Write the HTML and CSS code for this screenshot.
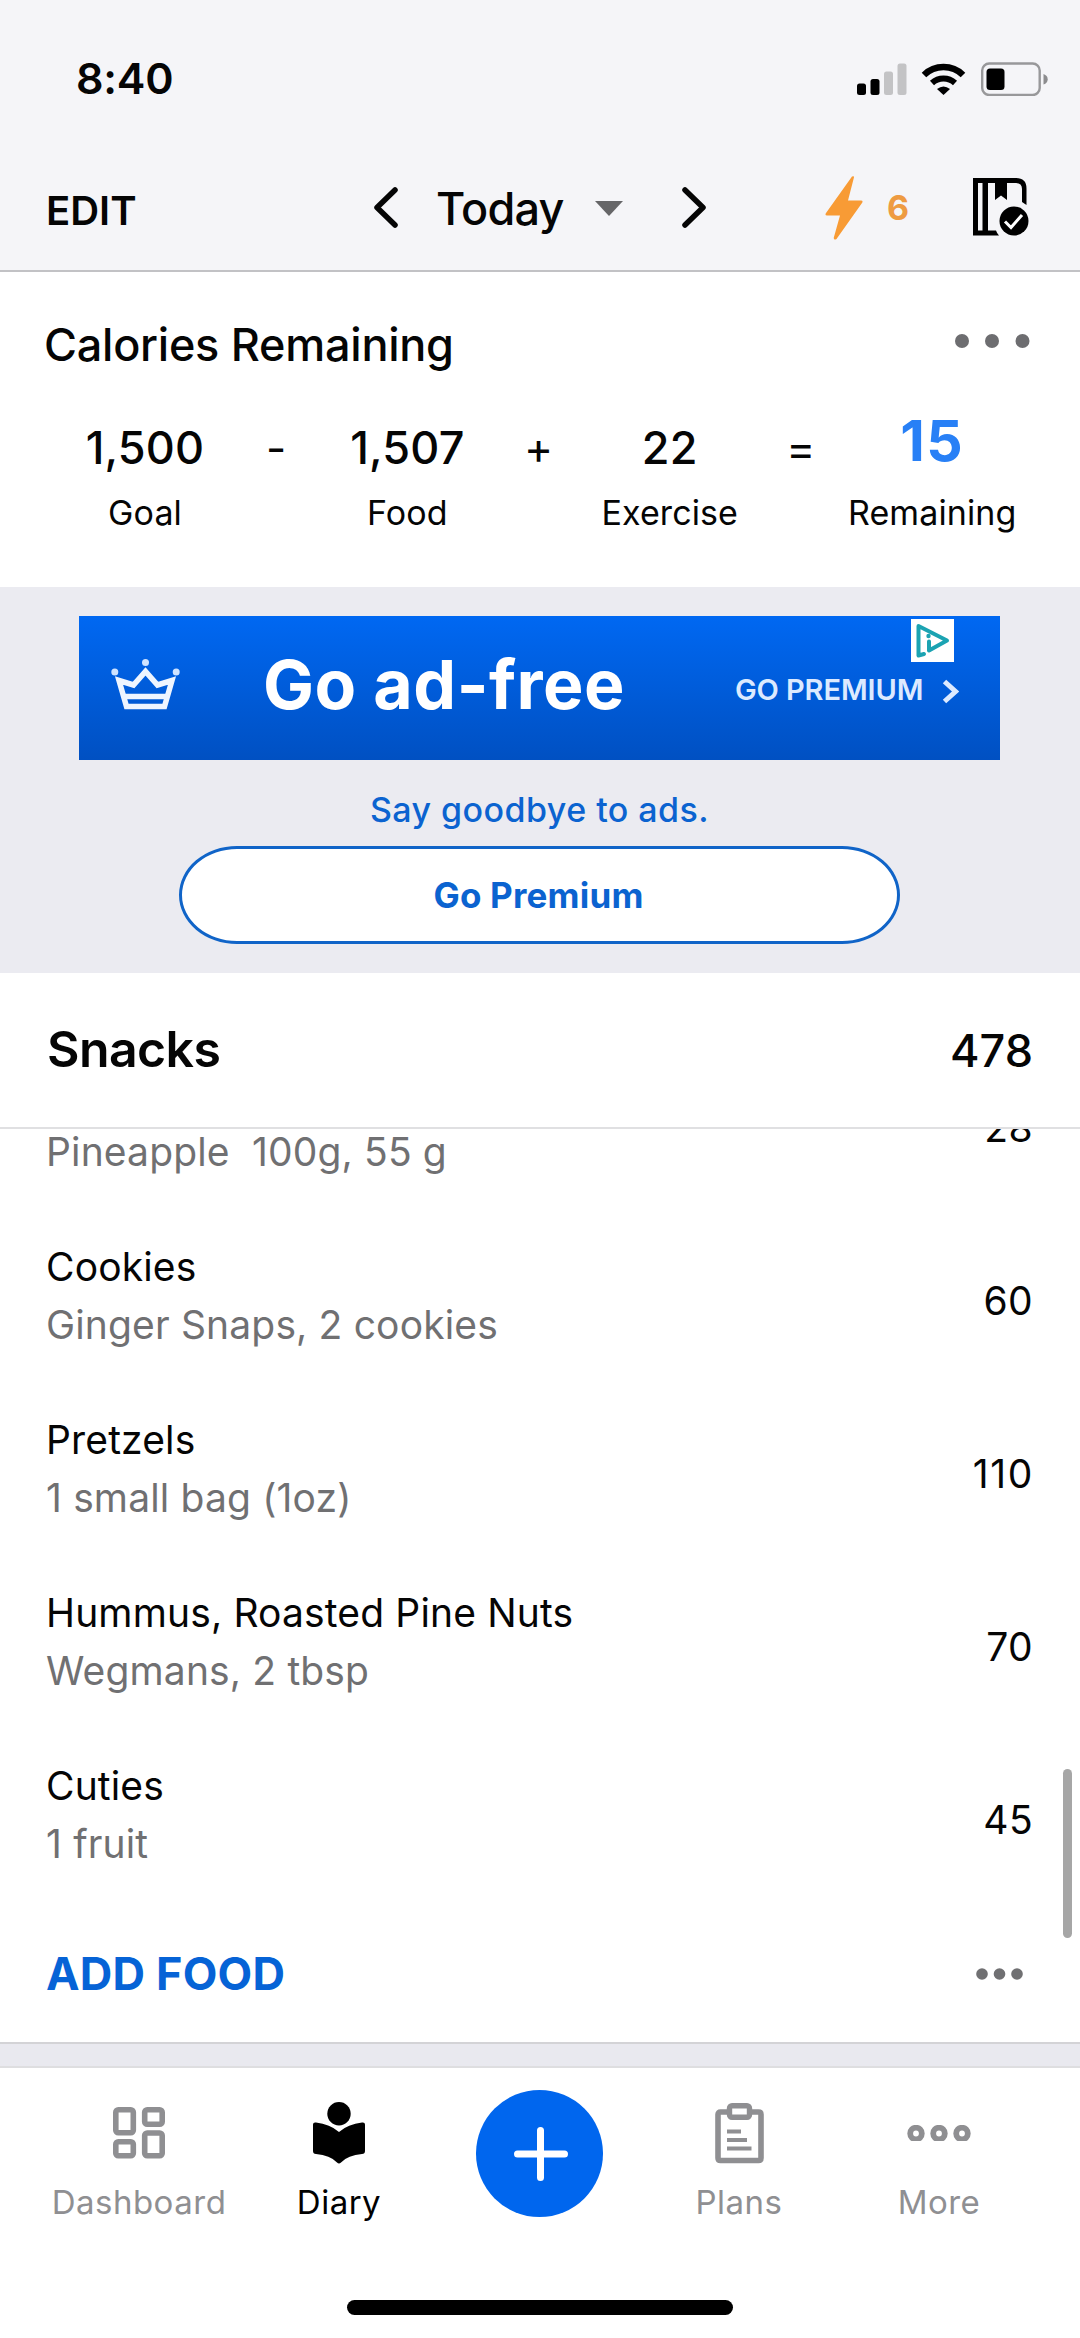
FILE: index.html
```html
<!DOCTYPE html>
<html lang="en">
<head>
<meta charset="utf-8">
<title>Diary</title>
<link rel="stylesheet" href="styles.css">
</head>
<body>
<div class="phone">
  <header class="top">
    <div class="status">
      <span class="clock">8:40</span>
      <svg class="status-icons" width="191" height="34" viewBox="857 61.500 191 34">
        <rect x="857" y="83" width="9" height="11.500" rx="2.500"/>
        <rect x="870.500" y="78.500" width="9" height="16" rx="2.500"/>
        <g fill="#c3c3c5"><rect x="884" y="71" width="9" height="23.500" rx="2.500"/><rect x="897.500" y="63" width="9" height="31.500" rx="2.500"/></g>
        <g fill="none" stroke="#000"><path d="M924 74.500a28 28 0 0 1 39 0" stroke-width="6.500"/><path d="M932 82.500a17 17 0 0 1 23 0" stroke-width="6"/></g>
        <path d="M937 88.500q6.500-5 13 0L943.500 94.500Z"/>
        <rect x="982.200" y="63" width="57.500" height="31.500" rx="7" fill="none" stroke="#98989a" stroke-width="2.400"/>
        <rect x="986.500" y="68" width="18" height="21.500" rx="3.500"/>
        <path d="M1043.500 73.500q4.200 1.500 4.200 5.300t-4.200 5.300Z" fill="#8c8c8e"/>
      </svg>
    </div>
    <div class="nav">
      <span class="edit">EDIT</span>
      <svg class="prev" width="24" height="41" viewBox="0 0 24 41"><path d="M21 3 3 20.500 21 38"/></svg>
      <span class="today">Today</span>
      <svg class="caret" width="28" height="15" viewBox="0 0 28 15"><path d="M0 0h28L14 15Z"/></svg>
      <svg class="next" width="24" height="41" viewBox="0 0 24 41"><path d="M3 3 21 20.500 3 38"/></svg>
      <svg class="bolt" width="38" height="64" viewBox="0 0 38 64"><path d="M29 1.300Q29.500 0 27 .5L1 37Q-.4 39.500 2 39.500H15L8.700 62Q9 64.600 11.500 63L37 27Q38.500 24.500 36 24.500H23Z"/></svg>
      <span class="streak">6</span>
      <svg class="book" width="56" height="58" viewBox="0 0 56 58">
        <path d="M0 0h43q10.500 0 10.500 10.500V27l-4.500-3V11q0-6-6-6H34v17l-6-4.500-6 4.500V5h-7v47.500h8q1 3 3 5H0ZM5 5v47.500h4.500V5Z" fill-rule="evenodd"/>
        <circle cx="41" cy="43" r="14.500"/><path d="m32 43.500 6 6L49 37" fill="none" stroke="#fff" stroke-width="3"/>
      </svg>
    </div>
  </header>

  <section class="summary">
    <div class="summary-head">
      <h2>Calories Remaining</h2>
      <svg width="75" height="14" viewBox="0 0 75 14"><circle cx="7" cy="7" r="7"/><circle cx="37" cy="7" r="7"/><circle cx="67.500" cy="7" r="7"/></svg>
    </div>
    <div class="equation">
      <div class="term"><b>1,500</b><span>Goal</span></div>
      <i class="op">-</i>
      <div class="term"><b>1,507</b><span>Food</span></div>
      <i class="op">+</i>
      <div class="term"><b>22</b><span>Exercise</span></div>
      <i class="op">=</i>
      <div class="term result"><b>15</b><span>Remaining</span></div>
    </div>
  </section>

  <section class="promo">
    <div class="banner">
      <svg class="crown" width="69" height="51" viewBox="0 0 69 51"><g fill="none" stroke="#eef5ff" stroke-width="5.500"><path d="M8 21.500 15.500 47.500H53.500L61 21.500 46.500 26 34.500 12.500 22.500 26Z"/><path d="M13 37.500H56"/></g><g fill="#cfe3ff"><circle cx="34.500" cy="3.500" r="3.500"/><circle cx="3.800" cy="13" r="3.500"/><circle cx="65.200" cy="13" r="3.500"/></g></svg>
      <strong>Go ad-free</strong>
      <span class="cta">GO PREMIUM</span>
      <svg class="cta-arrow" width="17" height="25" viewBox="0 0 17 25"><path d="M2.500 2.500 13.500 12.500 2.500 22.500"/></svg>
      <svg class="adchoices" width="43" height="43" viewBox="0 0 43 43"><path d="M0 0h43v43H0Z" fill="#fff"/><g fill="none" stroke="#1ba3b2" stroke-width="4" stroke-linecap="round" stroke-linejoin="round"><path d="M13 35 7.500 36.500V7L36 21.500 18 31.500V22.500"/></g><circle cx="17.500" cy="17" r="2.200" fill="#1ba3b2"/></svg>
    </div>
    <p class="bye">Say goodbye to ads.</p>
    <a class="premium">Go Premium</a>
  </section>

  <section class="meal">
    <div class="meal-head"><h3>Snacks</h3><span>478</span></div>
    <div class="foods">
      <div class="food partial"><div><small>Pineapple&nbsp; 100g, 55 g</small></div><span>28</span></div>
      <div class="food"><div><p>Cookies</p><small>Ginger Snaps, 2 cookies</small></div><span>60</span></div>
      <div class="food"><div><p>Pretzels</p><small>1 small bag (1oz)</small></div><span class="wide">110</span></div>
      <div class="food"><div><p>Hummus, Roasted Pine Nuts</p><small>Wegmans, 2 tbsp</small></div><span>70</span></div>
      <div class="food"><div><p>Cuties</p><small>1 fruit</small></div><span>45</span></div>
    </div>
    <div class="add"><a>ADD FOOD</a><svg width="47" height="12" viewBox="0 0 47 12"><circle cx="6" cy="6" r="5.800"/><circle cx="23.500" cy="6" r="5.800"/><circle cx="41" cy="6" r="5.800"/></svg></div>
    <div class="scrollbar"></div>
  </section>
  <div class="gap"></div>

  <footer class="tabs">
    <div class="tab"><svg width="52" height="52" viewBox="0 0 52 52" fill="none" stroke="currentColor" stroke-width="5.600"><rect x="2.800" y="2.800" width="17.500" height="23" rx="2.500"/><rect x="31.700" y="2.800" width="17.500" height="14.500" rx="2.500"/><rect x="2.800" y="34.700" width="17.500" height="14" rx="2.500"/><rect x="31.700" y="26" width="17.500" height="22.700" rx="2.500"/></svg><span>Dashboard</span></div>
    <div class="tab active"><svg width="52" height="62" viewBox="0 0 52 62"><circle cx="26" cy="11.700" r="11.700"/><path d="M0 22.500Q0 20 3 20.500 17 22 26 30 35 22 49 20.500q3-.5 3 2V49q0 3-3 3-14 1-21 8.500-2 2-4 0Q17 53 3 52 0 52 0 49Z"/></svg><span>Diary</span></div>
    <div class="plus"><svg width="127" height="127" viewBox="0 0 127 127"><circle cx="63.500" cy="63.500" r="63.500" fill="#0066ee"/><path d="M64.500 40.500v47M41.500 64h47" stroke="#fff" stroke-width="7" stroke-linecap="round"/></svg></div>
    <div class="tab"><svg width="49" height="61" viewBox="0 0 49 61" fill="none" stroke="currentColor"><path d="M14 9H5.500Q3 9 3 11.500V55q0 2.500 2.500 2.500h38q2.500 0 2.500-2.500V11.500Q46 9 43.500 9H35" stroke-width="5.600"/><rect x="14.500" y="2.800" width="20" height="11.500" rx="2.500" stroke-width="5.400"/><path d="M12 28.500H26M12 37H32M12 45.500H36.500" stroke-width="4.200"/></svg><span>Plans</span></div>
    <div class="tab"><svg width="64" height="16" viewBox="0 0 64 16" fill="none" stroke="currentColor" stroke-width="5.800"><circle cx="9" cy="8.500" r="5.800"/><circle cx="32" cy="8.500" r="5.800"/><circle cx="55" cy="8.500" r="5.800"/></svg><span>More</span></div>
  </footer>
  <div class="home"></div>
</div>
</body>
</html>
```

FILE: styles.css
```css
* { box-sizing: border-box; margin: 0; padding: 0; }
body { width: 1080px; height: 2338px; overflow: hidden; background: #fff; color: #050505; font-family: Inter, "Liberation Sans", sans-serif; }
svg { display: block; flex: none; }
span, b, strong, small, p, h2, h3, a { white-space: nowrap; }
.phone { width: 1080px; height: 2338px; display: flex; flex-direction: column; overflow: hidden; }

/* status bar and date navigation */
.top { height: 272px; flex: none; background: #f5f5f8; border-bottom: 2px solid #c2c2c5; }
.status { height: 157px; display: flex; justify-content: space-between; padding: 0 32px 0 76px; }
.clock { font-size: 43px; line-height: 52px; font-weight: 600; margin-top: 52px; letter-spacing: -0.2px; }
.status-icons { margin-top: 61.5px; }
.nav { height: 101px; display: flex; align-items: center; padding-left: 46px; }
.edit { width: 328px; font-size: 40px; font-weight: 600; padding-top: 5px; }
.prev, .next { flex: none; fill: none; stroke: #050505; stroke-width: 5.5px; stroke-linecap: round; stroke-linejoin: round; }
.today { width: 135px; margin-left: 38px; font-size: 45px; font-weight: 500; letter-spacing: -0.8px; padding-top: 1px; }
.caret { margin-left: 24px; margin-top: 1px; fill: #666668; }
.next { margin-left: 59px; }
.bolt { margin-left: 119px; fill: #f89b35; }
.streak { width: 62px; margin-left: 24px; font-size: 34px; font-weight: 700; color: #ee9b42; }
.book { margin-left: 24px; margin-top: -2px; }

/* calories summary */
.summary { height: 315px; flex: none; }
.summary-head { display: flex; justify-content: space-between; padding: 45px 50px 0 44px; height: 128px; }
.summary-head h2 { font-size: 45px; line-height: 56px; font-weight: 500; letter-spacing: -0.25px; }
.summary-head svg { margin-top: 17px; fill: #6d6d70; }
.equation { display: grid; grid-template-columns: 176px 86.4px 176px 86.4px 176px 86.4px 176px; padding-left: 57px; }
.term { display: flex; flex-direction: column; align-items: center; }
.term b, .op { font-size: 45px; font-weight: 500; font-style: normal; line-height: 56px; margin-top: 20px; text-align: center; letter-spacing: 0.2px; }
.op { font-size: 44px; font-weight: 400; margin-top: 20px; }
.term span { font-size: 34px; line-height: 40px; margin-top: 17px; letter-spacing: 0.1px; }
.term.result b { font-size: 57px; font-weight: 700; color: #2880f6; margin-top: 13px; margin-bottom: 7px; letter-spacing: 1.5px; }

/* advertisement */
.promo { height: 386px; flex: none; background: #ebebf1; display: flex; flex-direction: column; align-items: center; padding: 29px 1px 0 0; }
.banner { position: relative; width: 921px; height: 144px; display: flex; align-items: center; background: linear-gradient(#0068f2, #0050c2); color: #fff; }
.crown { margin-left: 32px; margin-top: -8px; }
.banner strong { width: 472px; margin-left: 83px; margin-top: -9px; font-size: 68px; font-weight: 700; letter-spacing: 0.5px; }
.cta { width: 207px; font-size: 29px; font-weight: 600; color: #dceaff; margin-top: 3px; letter-spacing: -0.1px; }
.cta-arrow { fill: none; stroke: #dceaff; stroke-width: 5px; margin-top: 7px; }
.adchoices { position: absolute; left: 832px; top: 3px; }
.bye { margin-top: 30px; font-size: 34px; line-height: 40px; font-weight: 500; color: #0b63d0; letter-spacing: 0.45px; }
.premium { margin-top: 16px; width: 721px; height: 98px; border: 3px solid #1064c8; border-radius: 58px / 49px; background: #fff; color: #0b63d0; font-size: 35px; font-weight: 700; line-height: 92px; letter-spacing: 0.2px; text-align: center; padding-right: 2px; }

/* snacks */
.meal { position: relative; height: 1069px; flex: none; }
.meal-head { height: 156px; border-bottom: 2px solid #e0e0e2; display: flex; align-items: center; justify-content: space-between; padding: 0 47px; }
.meal-head h3 { font-size: 50px; font-weight: 600; letter-spacing: -0.6px; margin-top: -2px; }
.meal-head span { font-size: 45px; font-weight: 500; }
.foods { height: 770px; overflow: hidden; display: flex; flex-direction: column; }
.food { height: 172.8px; flex: none; display: flex; justify-content: space-between; align-items: center; padding: 0 47px 0 46px; }
.food div { padding-bottom: 9px; }
.food.partial { margin-top: -87.5px; }
.food.partial div { padding-top: 58px; }
.food p, .food small { display: block; font-size: 39px; line-height: 58px; letter-spacing: 0.15px; }
.food small { color: #707072; }
.food span { font-size: 39px; letter-spacing: 0.4px; }
.food .wide { letter-spacing: 1.6px; margin-right: -1px; }
.add { height: 149px; display: flex; align-items: center; justify-content: space-between; padding: 0 57px 0 46px; color: #0663d6; }
.add a { font-size: 45px; font-weight: 650; letter-spacing: 0.2px; }
.add svg { fill: #707072; }
.scrollbar { position: absolute; right: 8px; top: 796px; width: 9px; height: 169px; border-radius: 5px; background: #a6a6a6; }
.gap { height: 26px; flex: none; background: #e9e9ef; border-top: 2px solid #d3d3d6; border-bottom: 2px solid #dedee0; }

/* tab bar */
.tabs { height: 232px; flex: none; display: grid; grid-template-columns: 200px 200px 200px 200px 200px; padding-left: 39px; }
.tab { display: grid; grid-template-rows: 98px 40px; justify-items: center; align-items: center; padding-top: 16px; color: #8f8f92; }
.tab span { font-size: 33px; line-height: 40px; letter-spacing: 0.5px; }
.tab.active { color: #000; }
.plus { display: flex; justify-content: center; padding-top: 22px; }
.home { width: 386px; height: 15px; flex: none; margin: 0 auto; border-radius: 8px; background: #000; }
```
